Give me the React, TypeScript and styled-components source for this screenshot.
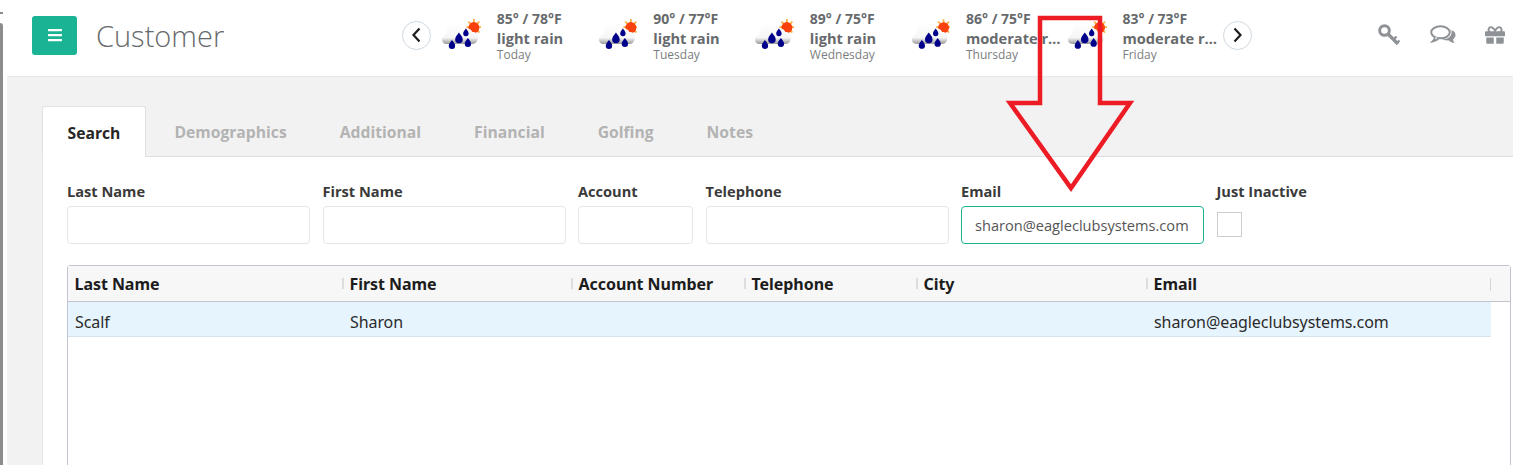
import React from "react";
import styled, { createGlobalStyle } from "styled-components";
import { FaBars, FaGift } from "react-icons/fa";

const GlobalStyle = createGlobalStyle`
    html, body {
        margin: 0;
        height: 465px;
        overflow: hidden;
        background: #fff;
        font-family: "Open Sans", "Noto Sans", sans-serif;
    }
    * {
        box-sizing: border-box;
    }
`;

const Shell = styled.div`
    position: relative;
    display: flex;
    width: 1513px;
    height: 465px;
    overflow: hidden;
`;

const Gutter = styled.div`
    width: 7px;
    flex: none;
    display: flex;
    flex-direction: column;
    gap: 9px;
    padding-top: 12px;
`;

const GutterTick = styled.div`
    width: 3px;
    height: 2px;
    flex: none;
    background: #8c8c8c;
`;

const GutterBar = styled.div`
    width: 3px;
    flex: 1;
    background: #8c8c8c;
    border-top-right-radius: 3px;
`;

const Main = styled.div`
    flex: 1;
    min-width: 0;
    display: flex;
    flex-direction: column;
`;

const TopBar = styled.header`
    height: 77px;
    flex: none;
    display: flex;
    align-items: center;
    padding: 0 0 6px 25px;
    background: #fff;
    border-bottom: 1px solid #e7e7e7;
`;

const MenuButton = styled.button`
    width: 45px;
    height: 39px;
    padding: 0;
    display: flex;
    align-items: center;
    justify-content: center;
    color: #fff;
    font-size: 16px;
    background: #1ab394;
    border: none;
    border-radius: 3px;
`;

const PageTitle = styled.h1`
    width: 306px;
    margin: 2px 0 0 19px;
    font-size: 29px;
    font-weight: 300;
    line-height: 40px;
    color: #676a6c;
`;

const Forecast = styled.div`
    display: flex;
    align-items: center;
    width: 850px;
`;

const RoundButton = styled.button`
    width: 29px;
    height: 29px;
    flex: none;
    padding: 0;
    display: flex;
    align-items: center;
    justify-content: center;
    color: #1d1d1d;
    background: #fff;
    border: 1px solid #cfd8e0;
    border-radius: 50%;
`;

const Days = styled.div`
    display: flex;
    flex: 1;
    min-width: 0;
    padding-left: 9px;
`;

const Day = styled.div`
    width: 156.5px;
    flex: none;
    display: flex;
    align-items: center;
`;

const DayText = styled.div`
    width: 100px;
    margin-left: 16px;
    color: #676a6c;
`;

const Temps = styled.div`
    font-size: 14px;
    font-weight: 700;
    line-height: 19px;
`;

const Summary = styled.div`
    font-size: 14.6px;
    font-weight: 700;
    line-height: 20px;
    white-space: nowrap;
    overflow: hidden;
    text-overflow: ellipsis;
`;

const DayName = styled.div`
    font-size: 12px;
    line-height: 13px;
    color: #7b7e80;
`;

const ToolIcons = styled.div`
    display: flex;
    align-items: center;
    margin-left: 125px;
    gap: 29px;
    color: #8e9296;
`;

const Content = styled.main`
    flex: 1;
    min-height: 0;
    padding: 29px 0 0 35px;
    background: #f2f2f2;
`;

const TabStrip = styled.nav`
    display: flex;
    height: 51px;
    border-bottom: 1px solid #dcdde0;
`;

const Tab = styled.div<{ $active?: boolean }>`
    height: ${(p) => (p.$active ? "51px" : "50px")};
    margin-right: 4px;
    padding: 2px 24.5px 0;
    display: flex;
    align-items: center;
    font-size: 15.7px;
    font-weight: 700;
    color: ${(p) => (p.$active ? "#262626" : "#b3b3b3")};
    background: ${(p) => (p.$active ? "#fff" : "transparent")};
    border: ${(p) => (p.$active ? "1px solid #e0e1e4" : "none")};
    border-bottom: none;
    border-radius: 3px 3px 0 0;
`;

const Panel = styled.section`
    height: 320px;
    padding: 23px 2px 0 24px;
    background: #fff;
    border-left: 1px solid #e7e7ec;
`;

const FilterRow = styled.div`
    display: flex;
    gap: 12.5px;
`;

const Field = styled.div<{ $width: number }>`
    width: ${(p) => p.$width}px;
    flex: none;
`;

const FieldLabel = styled.label`
    display: block;
    height: 26px;
    font-size: 14.6px;
    font-weight: 700;
    line-height: 22px;
    color: #3a3a3a;
    white-space: nowrap;
`;

const TextInput = styled.input<{ $focused?: boolean }>`
    display: block;
    width: 100%;
    height: 38px;
    padding: 0 13px;
    font-family: "Open Sans", sans-serif;
    font-size: 14.6px;
    color: #555;
    background: #fff;
    border: 1px solid ${(p) => (p.$focused ? "#1ab394" : "#e5e6e7")};
    border-radius: 4px;
    outline: none;
`;

const CheckBox = styled.div`
    width: 25px;
    height: 25px;
    margin-top: 6px;
    border: 1px solid #cfcdc9;
`;

const Grid = styled.div`
    height: 260px;
    margin-top: 21px;
    background: #fff;
    border: 1px solid #c3c2d0;
    border-radius: 3px 3px 0 0;
`;

const GridHead = styled.div`
    display: flex;
    height: 36px;
    background: #f7f7f7;
    border-bottom: 1px solid #c3c2d0;
`;

const HeadCell = styled.div<{ $width: number }>`
    width: ${(p) => p.$width}px;
    flex: none;
    display: flex;
    align-items: center;
    padding-left: 6.5px;
    font-family: "Noto Sans", "Open Sans", sans-serif;
    font-size: 16px;
    font-weight: 700;
    letter-spacing: -0.05px;
    color: #1c1c1c;
    position: relative;

    &:not(:first-child)::before {
        content: "";
        position: absolute;
        left: -1px;
        top: 12px;
        width: 2px;
        height: 11px;
        background: #dddddd;
    }
`;

const HeadEnd = styled.div`
    width: 1px;
    height: 13px;
    margin-top: 12px;
    background: #d5d5d5;
`;

const GridRow = styled.div`
    display: flex;
    height: 35px;
    width: 1423px;
    background: #e6f4fe;
    border-bottom: 1px solid #d7e3ec;
`;

const RowCell = styled.div<{ $width: number }>`
    width: ${(p) => p.$width}px;
    flex: none;
    display: flex;
    align-items: center;
    padding: 5px 0 0 7px;
    font-family: "Noto Sans", "Open Sans", sans-serif;
    font-size: 16px;
    letter-spacing: -0.08px;
    color: #2b2b2b;
`;

const Callout = styled.svg`
    position: absolute;
    left: 1005px;
    top: 14px;
    width: 132px;
    height: 180px;
    pointer-events: none;
`;

const WeatherIcon = ({ id }: { id: string }) => (
    <svg width="41" height="36" viewBox="0 0 41 36">
        <defs>
            <linearGradient id={id} x1="0" y1="0" x2="0" y2="1">
                <stop offset="0" stopColor="#ffffff" />
                <stop offset="0.72" stopColor="#f6f6f6" />
                <stop offset="1" stopColor="#9a9a9a" />
            </linearGradient>
        </defs>
        <g stroke="#fcb040" strokeWidth="1.8">
            <path d="M34 2v16M26.5 10h15M28.5 4.500l11 11M39.500 4.500l-11 11" />
        </g>
        <circle cx="34" cy="10.5" r="5.5" fill="#f8410d" />
        <path
            d="M7 27C3.500 27 2 25 2 22.500S4 18 6.500 17.500C6.500 10 11 4.500 17 4.500c4.500 0 7.500 3 9 7.500 2.500-1 5.500 0 6.500 3 3-.5 5.500 2 5.500 5.500S36 27 33 27Z"
            fill={`url(#${id})`}
        />
        <g fill="#00008b">
            <path d="M12 23c2 2.700 3.200 4 3.200 5.800a3.200 3.200 0 0 1-6.400 0C8.800 27 10 25.700 12 23Z" />
            <path d="M19 15.500c2.400 3.200 3.800 4.800 3.800 7a3.800 3.800 0 0 1-7.600 0c0-2.200 1.400-3.800 3.800-7Z" />
            <path d="M26 11.500c1.700 2.300 2.700 3.400 2.700 5a2.700 2.700 0 0 1-5.400 0c0-1.600 1-2.700 2.700-5Z" />
            <path d="M28 21c2 2.700 3.200 4 3.200 5.800a3.200 3.200 0 0 1-6.400 0c0-1.800 1.200-3.100 3.200-5.800Z" />
        </g>
    </svg>
);

const Chevron = ({ d }: { d: string }) => (
    <svg width="11" height="16" viewBox="0 0 11 16" fill="none" stroke="currentColor" strokeWidth="2.2">
        <path d={d} />
    </svg>
);

const KeyIcon = () => (
    <svg width="24" height="24" viewBox="0 0 24 24" fill="none" stroke="currentColor">
        <circle cx="7.500" cy="7.500" r="4.800" strokeWidth="3" />
        <path d="M11 11l10 10" strokeWidth="3.400" />
        <path d="M16.500 16.500l3-3M20 20l2.500-2.500" strokeWidth="2.400" />
    </svg>
);

const ChatIcon = () => (
    <svg width="26" height="20" viewBox="0 0 26 20" fill="none">
        <path
            d="M21.500 5c2.600 1 4 2.900 4 5 0 2-1.300 3.500-2.500 4.400.2 1.500 1 3 1.500 3.600-2.500-.2-4.500-1.300-6-2.700-1.800.4-4.500 0-6.500-1 6 .2 10.500-3 9.500-9.300Z"
            fill="currentColor"
        />
        <ellipse cx="10.500" cy="7.300" rx="9.300" ry="6" stroke="currentColor" strokeWidth="2" />
        <path d="M5 11.500c0 2-1 3.700-2.500 5 2.500-.3 4.500-1.500 6-3" stroke="currentColor" strokeWidth="1.800" fill="#fff" />
    </svg>
);

const forecast = [
    { temps: "85° / 78°F", summary: "light rain", day: "Today" },
    { temps: "90° / 77°F", summary: "light rain", day: "Tuesday" },
    { temps: "89° / 75°F", summary: "light rain", day: "Wednesday" },
    { temps: "86° / 75°F", summary: "moderate rain", day: "Thursday" },
    { temps: "83° / 73°F", summary: "moderate rain", day: "Friday" },
];

const tabs = ["Search", "Demographics", "Additional", "Financial", "Golfing", "Notes"];

const columns = [
    { name: "Last Name", width: 275, value: "Scalf" },
    { name: "First Name", width: 229, value: "Sharon" },
    { name: "Account Number", width: 173, value: "" },
    { name: "Telephone", width: 172, value: "" },
    { name: "City", width: 230, value: "" },
    { name: "Email", width: 343, value: "sharon@eagleclubsystems.com" },
];

const App = () => {
    return (
        <>
            <GlobalStyle />
            <Shell>
                <Gutter>
                    <GutterTick />
                    <GutterBar />
                </Gutter>
                <Main>
                    <TopBar>
                        <MenuButton aria-label="Menu">
                            <FaBars />
                        </MenuButton>
                        <PageTitle>Customer</PageTitle>
                        <Forecast>
                            <RoundButton aria-label="Previous">
                                <Chevron d="M8.500 1.500L2.500 8l6 6.500" />
                            </RoundButton>
                            <Days>
                                {forecast.map((d, i) => (
                                    <Day key={d.day}>
                                        <WeatherIcon id={`cloud-${i}`} />
                                        <DayText>
                                            <Temps>{d.temps}</Temps>
                                            <Summary>{d.summary}</Summary>
                                            <DayName>{d.day}</DayName>
                                        </DayText>
                                    </Day>
                                ))}
                            </Days>
                            <RoundButton aria-label="Next">
                                <Chevron d="M2.500 1.500l6 6.500-6 6.500" />
                            </RoundButton>
                        </Forecast>
                        <ToolIcons>
                            <KeyIcon />
                            <ChatIcon />
                            <FaGift size={20} />
                        </ToolIcons>
                    </TopBar>
                    <Content>
                        <TabStrip>
                            {tabs.map((t, i) => (
                                <Tab key={t} $active={i === 0}>
                                    {t}
                                </Tab>
                            ))}
                        </TabStrip>
                        <Panel>
                            <FilterRow>
                                <Field $width={243}>
                                    <FieldLabel>Last Name</FieldLabel>
                                    <TextInput />
                                </Field>
                                <Field $width={243}>
                                    <FieldLabel>First Name</FieldLabel>
                                    <TextInput />
                                </Field>
                                <Field $width={115}>
                                    <FieldLabel>Account</FieldLabel>
                                    <TextInput />
                                </Field>
                                <Field $width={243}>
                                    <FieldLabel>Telephone</FieldLabel>
                                    <TextInput />
                                </Field>
                                <Field $width={243}>
                                    <FieldLabel>Email</FieldLabel>
                                    <TextInput $focused defaultValue="sharon@eagleclubsystems.com" />
                                </Field>
                                <Field $width={100}>
                                    <FieldLabel>Just Inactive</FieldLabel>
                                    <CheckBox />
                                </Field>
                            </FilterRow>
                            <Grid>
                                <GridHead>
                                    {columns.map((c) => (
                                        <HeadCell key={c.name} $width={c.width}>
                                            {c.name}
                                        </HeadCell>
                                    ))}
                                    <HeadEnd />
                                </GridHead>
                                <GridRow>
                                    {columns.map((c) => (
                                        <RowCell key={c.name} $width={c.width}>
                                            {c.value}
                                        </RowCell>
                                    ))}
                                </GridRow>
                            </Grid>
                        </Panel>
                    </Content>
                </Main>
                <Callout viewBox="0 0 132 180">
                    <path
                        d="M35 4H95V89H125L66 174L5 89H35Z"
                        fill="none"
                        stroke="#ed1c24"
                        strokeWidth="4.5"
                    />
                </Callout>
            </Shell>
        </>
    );
};

export default App;
